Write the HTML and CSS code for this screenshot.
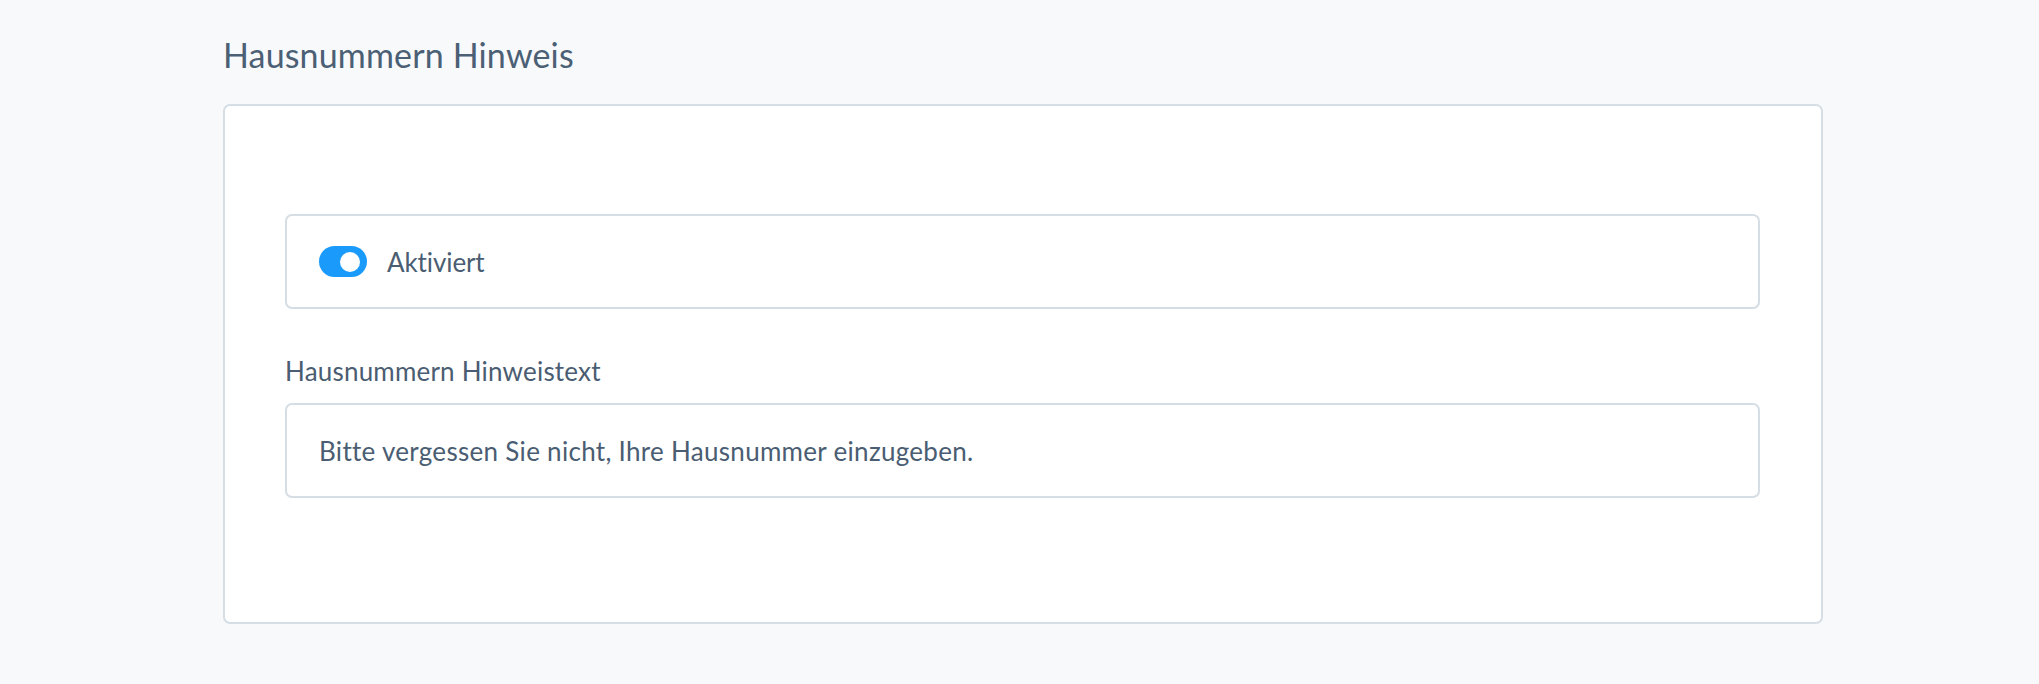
FILE: index.html
```html
<!DOCTYPE html>
<html lang="de">
<head>
<meta charset="utf-8">
<title>Hausnummern Hinweis</title>
<link rel="stylesheet" href="styles.css">
</head>
<body>
<main class="page">
  <h2 class="section-title">Hausnummern Hinweis</h2>
  <section class="card">
    <label class="switch-row">
      <span class="switch" aria-hidden="true"><span class="switch-knob"></span></span>
      <span class="switch-label">Aktiviert</span>
    </label>
    <label class="field-label" for="hint">Hausnummern Hinweistext</label>
    <input class="field-input" id="hint" type="text" value="Bitte vergessen Sie nicht, Ihre Hausnummer einzugeben.">
  </section>
</main>
</body>
</html>
```

FILE: styles.css
```css
html, body {
  margin: 0;
  padding: 0;
  background: #f8f9fb;
}

body {
  font-family: Lato, "Liberation Sans", sans-serif;
  font-variant-ligatures: none;
  color: #4a5d72;
}

.page {
  padding: 34px 0 0 223px;
}

.section-title {
  margin: 0 0 28px 0;
  font-size: 34px;
  line-height: 42px;
  letter-spacing: 0.15px;
  font-weight: 400;
  color: #4b5f75;
}

.card {
  box-sizing: border-box;
  width: 1600px;
  height: 520px;
  background: #ffffff;
  border: 2px solid #d5dde5;
  border-radius: 7px;
  padding: 108px 61px 0 60px;
  display: flex;
  flex-direction: column;
}

.switch-row {
  box-sizing: border-box;
  height: 95px;
  border: 2px solid #d5dde5;
  border-radius: 7px;
  padding-left: 32px;
  display: flex;
  align-items: center;
  gap: 20px;
}

.switch {
  box-sizing: border-box;
  width: 48px;
  height: 31px;
  border-radius: 16px;
  background: #1a9bfc;
  display: flex;
  align-items: center;
  justify-content: flex-end;
  padding-right: 7px;
}

.switch-knob {
  width: 20px;
  height: 20px;
  border-radius: 50%;
  background: #ffffff;
}

.switch-label {
  font-size: 26px;
  line-height: 30px;
  letter-spacing: -0.1px;
}

.field-label {
  display: block;
  margin-top: 47px;
  font-size: 26px;
  line-height: 30px;
  letter-spacing: 0.2px;
}

.field-input {
  box-sizing: border-box;
  display: block;
  width: 100%;
  height: 95px;
  margin: 17px 0 0 0;
  padding: 0 32px;
  border: 2px solid #d5dde5;
  border-radius: 7px;
  background: #ffffff;
  font-family: inherit;
  font-variant-ligatures: none;
  font-size: 26px;
  line-height: 30px;
  letter-spacing: 0.3px;
  color: #4a5d72;
  outline: none;
}
```
